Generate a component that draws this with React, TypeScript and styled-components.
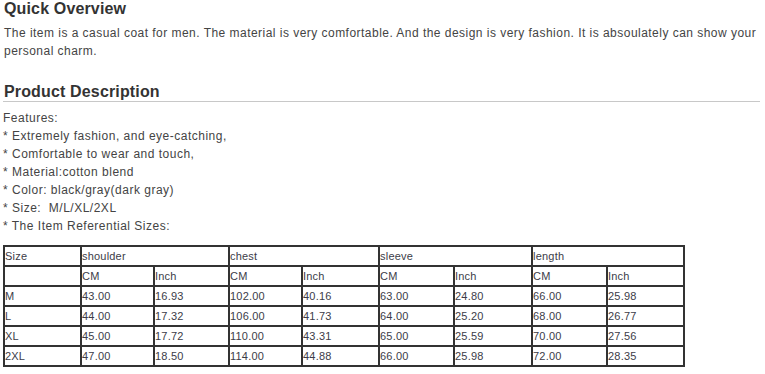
import React from 'react';
import styled, { createGlobalStyle } from 'styled-components';

const GlobalStyle = createGlobalStyle`
    body {
        margin: 0;
        background: #fff;
        font-family: "Liberation Sans", Arial, sans-serif;
        color: #444;
    }
`;

const Page = styled.div`
    padding: 0 5px 0 3px;
`;

const Heading = styled.h2<{ underline?: boolean }>`
    margin: ${(props) => (props.underline ? '23px 0 0' : '0')};
    padding-left: 1px;
    font-size: 16px;
    line-height: 18px;
    font-weight: bold;
    letter-spacing: 0.15px;
    color: #333;
    border-bottom: ${(props) => (props.underline ? '1px solid #c8c8c8' : 'none')};
`;

const Text = styled.p`
    margin: 6px 0 0;
    padding-left: 1px;
    font-size: 12px;
    line-height: 18px;
    letter-spacing: 0.47px;
`;

const Features = styled.div`
    margin-top: 7px;
    font-size: 12px;
    line-height: 18px;
    letter-spacing: 0.5px;
    div {
        white-space: pre;
    }
`;

const SizeTable = styled.table`
    margin-top: 10px;
    border-collapse: collapse;
    table-layout: fixed;
    width: 680px;
    font-size: 11px;
    letter-spacing: 0.2px;
    color: #3c3c48;
`;

const Col = styled.col<{ w: number }>`
    width: ${(props) => props.w}px;
`;

const Cell = styled.td`
    border: 2px solid #333;
    padding: 0;
    height: 18px;
    line-height: 18px;
    text-align: left;
    vertical-align: middle;
    white-space: nowrap;
`;

const features = [
    'Features:',
    '* Extremely fashion, and eye-catching,',
    '* Comfortable to wear and touch,',
    '* Material:cotton blend',
    '* Color: black/gray(dark gray)',
    '* Size:  M/L/XL/2XL',
    '* The Item Referential Sizes:',
];

const widths = [77, 73, 75, 73, 77, 75, 78, 75, 77];

const rows = [
    ['M', '43.00', '16.93', '102.00', '40.16', '63.00', '24.80', '66.00', '25.98'],
    ['L', '44.00', '17.32', '106.00', '41.73', '64.00', '25.20', '68.00', '26.77'],
    ['XL', '45.00', '17.72', '110.00', '43.31', '65.00', '25.59', '70.00', '27.56'],
    ['2XL', '47.00', '18.50', '114.00', '44.88', '66.00', '25.98', '72.00', '28.35'],
];

function App() {
    return (
        <Page>
            <GlobalStyle />
            <Heading>Quick Overview</Heading>
            <Text>
                The item is a casual coat for men. The material is very comfortable. And the design is very fashion. It is absoulately can show your personal charm.
            </Text>
            <Heading underline>Product Description</Heading>
            <Features>
                {features.map((f) => (
                    <div key={f}>{f}</div>
                ))}
            </Features>
            <SizeTable>
                <colgroup>
                    {widths.map((w, i) => (
                        <Col key={i} w={w} />
                    ))}
                </colgroup>
                <tbody>
                    <tr>
                        <Cell>Size</Cell>
                        <Cell colSpan={2}>shoulder</Cell>
                        <Cell colSpan={2}>chest</Cell>
                        <Cell colSpan={2}>sleeve</Cell>
                        <Cell colSpan={2}>length</Cell>
                    </tr>
                    <tr>
                        <Cell></Cell>
                        <Cell>CM</Cell>
                        <Cell>Inch</Cell>
                        <Cell>CM</Cell>
                        <Cell>Inch</Cell>
                        <Cell>CM</Cell>
                        <Cell>Inch</Cell>
                        <Cell>CM</Cell>
                        <Cell>Inch</Cell>
                    </tr>
                    {rows.map((r) => (
                        <tr key={r[0]}>
                            {r.map((v, i) => (
                                <Cell key={i}>{v}</Cell>
                            ))}
                        </tr>
                    ))}
                </tbody>
            </SizeTable>
        </Page>
    );
}

export default App;
